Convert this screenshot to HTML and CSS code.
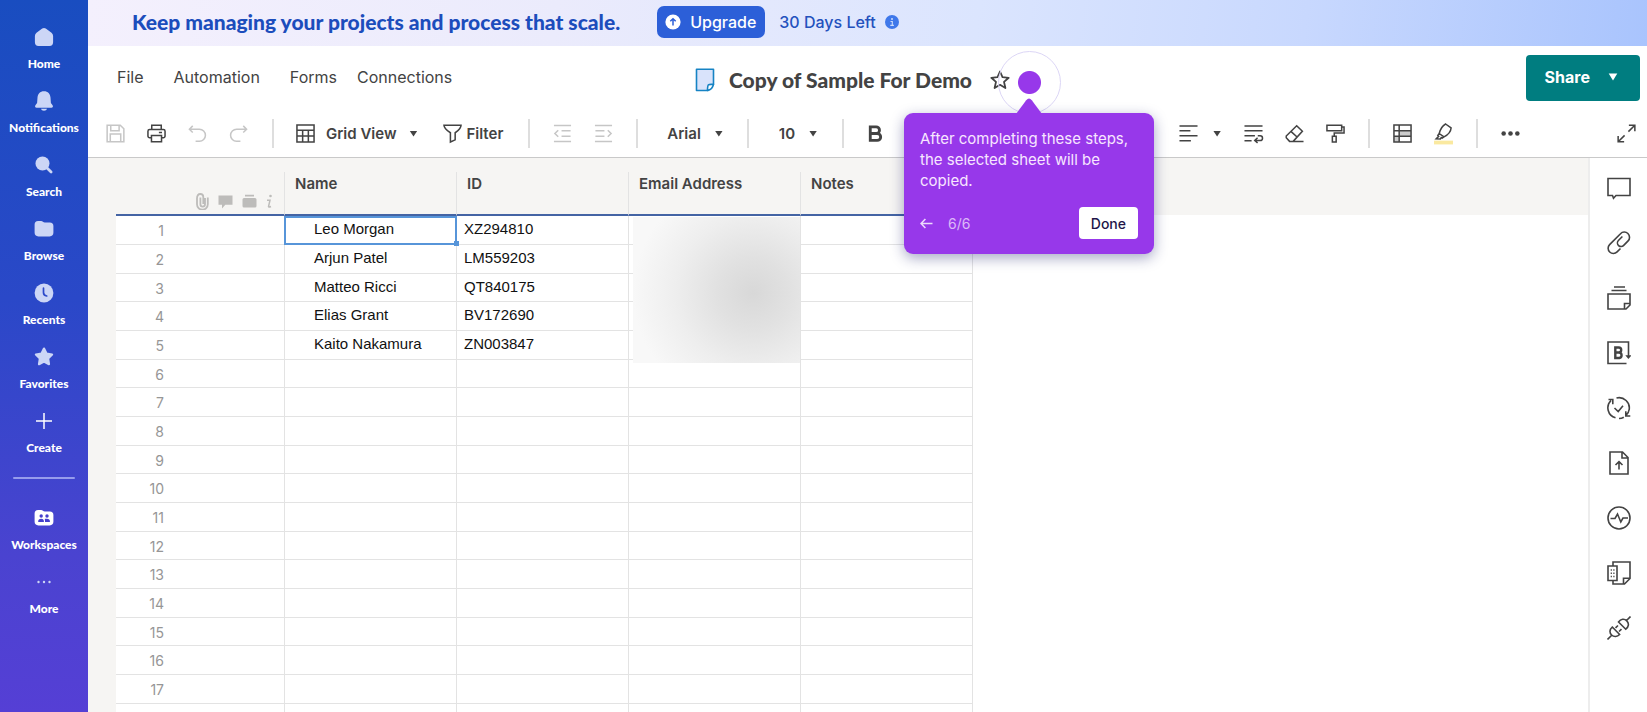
FILE: index.html
```html
<!DOCTYPE html>
<html lang="en">
<head>
<meta charset="utf-8">
<title>Copy of Sample For Demo</title>
<link rel="stylesheet" href="styles.css">
</head>
<body>
<div class="app">
  <nav class="sidebar" aria-label="Main">
    <a class="nav-item" href="#home"><svg class="nav-icon" viewBox="0 0 20 20"><path d="M8.2 1.6a3 3 0 0 1 3.6 0l5.7 4.1a4 4 0 0 1 1.6 3.2v6.4a3.6 3.6 0 0 1-3.6 3.6h-11a3.6 3.6 0 0 1-3.6-3.6V8.900a4 4 0 0 1 1.600-3.200z"/></svg><span>Home</span></a>
    <a class="nav-item" href="#notifications"><svg class="nav-icon" viewBox="0 0 20 20"><path d="M10 .3c4 0 6.200 2.700 6.500 6.300l.4 5.400 1.700 2.300c.8 1.200.1 2.500-1.200 2.500H2.600c-1.300 0-2-1.300-1.200-2.500L3.100 12l.4-5.400C3.800 3 6 .3 10 .3zM7 17.800h6c-.3 1.200-1.400 1.900-3 1.900s-2.700-.7-3-1.900z"/></svg><span>Notifications</span></a>
    <a class="nav-item" href="#search"><svg class="nav-icon" viewBox="0 0 20 20"><circle cx="8.500" cy="8.500" r="7"/><path d="M12.500 12.500l4.600 4.600" stroke="#ccd6f6" stroke-width="2.800" stroke-linecap="round"/></svg><span>Search</span></a>
    <a class="nav-item" href="#browse"><svg class="nav-icon" viewBox="0 0 20 20"><path d="M.6 5.500a3.500 3.500 0 0 1 3.500-3.500h3c1.500 0 2.200 1.500 3.700 1.500h5a3.600 3.600 0 0 1 3.600 3.600v6.500a3.800 3.800 0 0 1-3.800 3.800H4.400a3.800 3.800 0 0 1-3.800-3.800z"/></svg><span>Browse</span></a>
    <a class="nav-item" href="#recents"><svg class="nav-icon" viewBox="0 0 20 20"><circle cx="10" cy="10" r="9.400"/><path d="M9.500 5.200v4.300c0 1.700 1.200 3.200 3.200 3.500" fill="none" stroke="#2c49ca" stroke-width="1.700" stroke-linecap="round"/></svg><span>Recents</span></a>
    <a class="nav-item" href="#favorites"><svg class="nav-icon" viewBox="0 0 20 20"><path d="M10 1.600l2.500 5 5.600.9-4 4 .9 5.700-5-2.600-5 2.600.9-5.700-4-4 5.600-.9z" stroke="#ccd6f6" stroke-width="2.200" stroke-linejoin="round"/></svg><span>Favorites</span></a>
    <a class="nav-item" href="#create"><svg class="nav-icon nav-icon-bright" viewBox="0 0 20 20"><path d="M10 2v16M2 10h16" stroke="#fff" stroke-width="1.500"/></svg><span>Create</span></a>
    <hr class="nav-divider">
    <a class="nav-item" href="#workspaces"><svg class="nav-icon nav-icon-bright" viewBox="0 0 20 20"><path d="M.6 5.500A3.500 3.500 0 0 1 4.100 2h3c1.500 0 2.200 1.500 3.700 1.500h5a3.600 3.600 0 0 1 3.600 3.600v6.500a3.800 3.800 0 0 1-3.800 3.800H4.400a3.800 3.800 0 0 1-3.800-3.800z"/><g fill="#443fcd"><circle cx="7.200" cy="8" r="1.700"/><circle cx="13" cy="8" r="1.700"/><path d="M4.200 14v-.8c0-1.600 1-2.500 3-2.500 1.900 0 2.700.9 2.700 2.500v.8zM11 14v-.8c0-1 0-1.700-.5-2.100.6-.3 1.400-.4 2.400-.4 2 0 3 .9 3 2.500v.8z"/></g></svg><span>Workspaces</span></a>
    <a class="nav-item" href="#more"><svg class="nav-icon" viewBox="0 0 20 20"><circle cx="4.500" cy="10" r="1.200"/><circle cx="10" cy="10" r="1.200"/><circle cx="15.500" cy="10" r="1.200"/></svg><span>More</span></a>
  </nav>

  <div class="workspace">
    <div class="banner">
      <strong class="banner-text">Keep managing your projects and process that scale.</strong>
      <button class="upgrade" type="button"><svg width="16" height="16" viewBox="0 0 16 16"><circle cx="8" cy="8" r="7.600" fill="#fff"/><path d="M8 11.500V5M5.300 7.300L8 4.700l2.700 2.600" fill="none" stroke="#2c5fd8" stroke-width="1.500"/></svg>Upgrade</button>
      <span class="trial">30 Days Left</span>
      <svg class="info" width="14" height="14" viewBox="0 0 14 14"><circle cx="7" cy="7" r="7" fill="#3f78ea"/><circle cx="7" cy="4" r="1" fill="#cddcfb"/><path d="M5.500 6.500h1.800v4M5.300 10.400h3.600" fill="none" stroke="#cddcfb" stroke-width="1.100"/></svg>
    </div>

    <header class="header">
      <nav class="menu" aria-label="Sheet">
        <button type="button">File</button>
        <button type="button">Automation</button>
        <button type="button">Forms</button>
        <button type="button">Connections</button>
      </nav>
      <div class="title">
        <svg width="20" height="24" viewBox="0 0 20 24"><path d="M1.500 1.200h17v15.300l-5.500 6h-11.500z" fill="#d9e3fb" stroke="#1683c4" stroke-width="1.600" stroke-linejoin="round"/><path d="M12.400 22.500c.2-3.500.3-5 1-5.700.7-.6 2.400-.4 5-.4-.6 3.500-2.400 5.600-6 6.100z" fill="#fff" stroke="#1683c4" stroke-width="1.600" stroke-linejoin="round"/></svg>
        <h1>Copy of Sample For Demo</h1>
        <div class="favorite">
          <button type="button" aria-label="Favorite"><svg width="20" height="20" viewBox="0 0 20 20"><path d="M10 1.500l2.500 5.700 6.200.6-4.700 4.100 1.400 6.100-5.400-3.200-5.400 3.200L6 11.900 1.300 7.800l6.200-.6z" fill="none" stroke="#434343" stroke-width="1.800" stroke-linejoin="round"/></svg></button>
          <span class="beacon"></span>
          <section class="tour" role="dialog" aria-label="Guided tour">
            <svg class="tour-arrow" width="26" height="16" viewBox="0 0 26 16"><path d="M0 16L10.200 2.200q2.800-3.400 5.600 0L26 16z" fill="#9738ea"/></svg>
            <p>After completing these steps, the selected sheet will be copied.</p>
            <footer>
              <button class="tour-back" type="button" aria-label="Back"><svg width="13" height="11" viewBox="0 0 13 11"><path d="M12.500 5.500H1.200M5.400 1L1 5.500 5.400 10" fill="none" stroke="#ecd9fc" stroke-width="1.600"/></svg></button>
              <span class="tour-step">6/6</span>
              <button class="tour-done" type="button">Done</button>
            </footer>
          </section>
        </div>
      </div>
      <button class="share" type="button">Share<svg width="10" height="8" viewBox="0 0 10 8"><path d="M.7.500h8.600L5 7.500z" fill="#fff"/></svg></button>
    </header>

    <div class="toolbar" role="toolbar" aria-label="Formatting">
      <div class="tools tools-file">
        <button class="tool muted" type="button" aria-label="Save"><svg viewBox="0 0 20 20"><path d="M1.200 1.200H15L18.800 5v13.800H1.200zM5 1.500v5.700h8.800V1.500M4.500 18.500v-8h11v8"/></svg></button>
        <button class="tool" type="button" aria-label="Print"><svg viewBox="0 0 20 20"><path d="M5 5.500V1.200h10v4.300M4.500 14.500H2.800A1.800 1.800 0 0 1 1 12.700V7.500a1.800 1.800 0 0 1 1.800-1.800h14.400A1.800 1.800 0 0 1 19 7.500v5.200a1.800 1.800 0 0 1-1.800 1.800h-1.700M4.700 12h10.600v6.800H4.700zM12.500 8.900h3.300"/></svg></button>
        <button class="tool muted" type="button" aria-label="Undo"><svg viewBox="0 0 20 20"><path d="M5 2L1.500 5.500 5 9M1.800 5.500H12a6.300 6.300 0 0 1 0 12.700H8"/></svg></button>
        <button class="tool muted" type="button" aria-label="Redo"><svg viewBox="0 0 20 20"><path d="M15 2l3.500 3.500L15 9M18.200 5.500H8a6.300 6.300 0 0 0 0 12.700h4"/></svg></button>
      </div>
      <div class="tools tools-view">
        <button class="text-tool" type="button"><svg viewBox="0 0 20 20"><path d="M1 1h18v18H1zM1 6.500h18M1 12.700h18M7 6.500V19M13 6.500V19"/></svg>Grid View<i class="caret"></i></button>
        <button class="text-tool filter" type="button"><svg viewBox="0 0 20 20"><path d="M1 1.200h18c-.1 3.300-2 5.300-6.200 8v7.500l-5 2.300V9.200C3.500 6.500 1.200 4.500 1 1.200z"/></svg>Filter</button>
      </div>
      <div class="tools tools-indent">
        <button class="tool muted" type="button" aria-label="Outdent"><svg viewBox="0 0 20 20"><path d="M1 1.500h18M9 7.200h9.500M9 12.800h9.500M1 18.500h18M5.500 6.500L2 10l3.500 3.500"/></svg></button>
        <button class="tool muted" type="button" aria-label="Indent"><svg viewBox="0 0 20 20"><path d="M1 1.500h18M1.500 7.200H11M1.500 12.800H11M1 18.500h18M14.500 6.500L18 10l-3.500 3.500"/></svg></button>
      </div>
      <div class="tools tools-font">
        <label class="pick"><select aria-label="Font"><option>Arial</option></select><i class="caret"></i></label>
      </div>
      <div class="tools tools-size">
        <label class="pick"><select aria-label="Font size"><option>10</option></select><i class="caret"></i></label>
      </div>
      <div class="tools tools-bold">
        <button class="tool bold" type="button" aria-label="Bold"><svg viewBox="0 0 20 20"><path d="M4.500 3h6.200a3.500 3.500 0 0 1 0 7H4.500zM4.500 10h7.300a3.600 3.600 0 0 1 0 7.300H4.500z"/></svg></button>
      </div>
      <div class="tools tools-format">
        <button class="text-tool align" type="button" aria-label="Align"><svg viewBox="0 0 20 20"><path d="M.5 2h19M.5 7.200h11.500M.5 12.400h19M.5 17.600h12"/></svg><i class="caret"></i></button>
        <button class="tool" type="button" aria-label="Wrap"><svg viewBox="0 0 20 20"><path d="M.5 2h19M.5 7.200h19M.5 12.400h11M.5 17.600h7.500M14.500 12.400H17a2.300 2.300 0 0 1 0 5h-5M14.300 14.500l-3 2.900 3 2.500"/></svg></button>
        <button class="tool" type="button" aria-label="Clear format"><svg viewBox="0 0 20 20"><path d="M12.300 1.800l6 5.800-9.700 10.700H4.800L1.300 14.500v-1.800zM6.500 8l6.500 6M8.500 18.500h11"/></svg></button>
        <button class="tool" type="button" aria-label="Format painter"><svg viewBox="0 0 20 20"><path d="M1 1.300h15.500V7H1zM16.500 3.200H19v6.300H8.700v3M6.700 12.800h4v6.200h-4z"/></svg></button>
      </div>
      <div class="tools tools-cell">
        <button class="tool" type="button" aria-label="Conditional formatting"><svg viewBox="0 0 20 20"><path d="M7 7h12v6H7zM1 13h5.500v6H1z" class="shade"/><path d="M1 1h18v18H1zM1 7h18M1 13h18M6.500 1v18"/></svg></button>
        <button class="tool" type="button" aria-label="Highlight changes"><svg viewBox="0 0 20 20"><path d="M0 17.500h20v4H0z" class="marker"/><path d="M12.200 0l5.800 4.200c-.3 3.800-2.800 7-7.500 9.300L5.500 10C6.600 5.500 8.700 2 12.200 0zM5.500 10L4 12l.9 1-2.600 2.600 4.400.2.900-1.600 1 .7 1.900-1.400"/></svg></button>
      </div>
      <div class="tools tools-more">
        <button class="tool" type="button" aria-label="More"><svg viewBox="0 0 20 20"><g fill="#434343" stroke="none"><circle cx="2.800" cy="10" r="2.400"/><circle cx="10" cy="10" r="2.400"/><circle cx="17.200" cy="10" r="2.400"/></g></svg></button>
      </div>
      <button class="tool expand" type="button" aria-label="Expand"><svg viewBox="0 0 20 20"><path d="M12.500 1.200h6.300v6.300M18.500 1.500l-6.500 6.500M1.200 12.500v6.300h6.300M1.500 18.500L8 12"/></svg></button>
    </div>

    <div class="content">
      <main class="sheet">
        <table class="grid">
          <colgroup><col class="col-number"><col class="col-data"><col class="col-data"><col class="col-data"><col class="col-data"></colgroup>
          <thead>
            <tr>
              <th class="row-tools" aria-label="Row tools">
                <div class="row-icons">
                  <svg width="13" height="17" viewBox="0 0 13 17"><path d="M9 5v6.300a2.300 2.300 0 0 1-4.600 0V4.500M1 5v6.300a5 5 0 0 0 10.800 0V4.500M1 5.500C1 2.500 2.300 1 4.300 1s3 1.200 3 3v7" fill="none" stroke="#bdbcba" stroke-width="1.800"/></svg>
                  <svg width="15" height="15" viewBox="0 0 15 15"><path d="M.5 1.500h14v9.300H7.300L4 14.500v-3.700H.5z" fill="#bdbcba"/></svg>
                  <svg width="15" height="15" viewBox="0 0 15 15"><path d="M3 .8h9v1.700H3zM2 4h11q1.500 0 1.500 1.500V12q0 1.500-1.500 1.500H2Q.5 13.500.5 12V5.500Q.5 4 2 4z" fill="#bdbcba"/></svg>
                  <svg width="7" height="15" viewBox="0 0 7 15"><circle cx="4.500" cy="2" r="1.300" fill="#bdbcba"/><path d="M1 6.200h3L2.500 12.500q0 1 2.500 0" fill="none" stroke="#bdbcba" stroke-width="1.500"/></svg>
                </div>
              </th>
              <th>Name</th><th>ID</th><th>Email Address</th><th>Notes</th>
            </tr>
          </thead>
          <tbody>
            <tr><th>1</th><td class="name selected">Leo Morgan</td><td>XZ294810</td><td class="redacted"><div class="haze"></div></td><td></td></tr>
            <tr><th>2</th><td class="name">Arjun Patel</td><td>LM559203</td><td></td><td></td></tr>
            <tr><th>3</th><td class="name">Matteo Ricci</td><td>QT840175</td><td></td><td></td></tr>
            <tr><th>4</th><td class="name">Elias Grant</td><td>BV172690</td><td></td><td></td></tr>
            <tr><th>5</th><td class="name">Kaito Nakamura</td><td>ZN003847</td><td></td><td></td></tr>
            <tr><th>6</th><td></td><td></td><td></td><td></td></tr>
            <tr><th>7</th><td></td><td></td><td></td><td></td></tr>
            <tr><th>8</th><td></td><td></td><td></td><td></td></tr>
            <tr><th>9</th><td></td><td></td><td></td><td></td></tr>
            <tr><th>10</th><td></td><td></td><td></td><td></td></tr>
            <tr><th>11</th><td></td><td></td><td></td><td></td></tr>
            <tr><th>12</th><td></td><td></td><td></td><td></td></tr>
            <tr><th>13</th><td></td><td></td><td></td><td></td></tr>
            <tr><th>14</th><td></td><td></td><td></td><td></td></tr>
            <tr><th>15</th><td></td><td></td><td></td><td></td></tr>
            <tr><th>16</th><td></td><td></td><td></td><td></td></tr>
            <tr><th>17</th><td></td><td></td><td></td><td></td></tr>
            <tr><th></th><td></td><td></td><td></td><td></td></tr>
          </tbody>
        </table>
      </main>
      <aside class="rail" aria-label="Panels">
        <button type="button" aria-label="Conversations"><svg viewBox="0 0 24 24"><path d="M1 2.500h22v17H9l-2.500 2.700-1-2.700H1z"/></svg></button>
        <button type="button" aria-label="Attachments"><svg viewBox="0 0 24 24"><path d="M13.500 17.500l-3.400 3.400a5.200 5.200 0 0 1-7.500-7.300L13.500 2.700a5.200 5.200 0 0 1 7.600 7.200l-4.400 4.500a3.600 3.600 0 0 1-5.300-4.900l4-4"/></svg></button>
        <button type="button" aria-label="Proofs"><svg viewBox="0 0 24 24"><path d="M7 1h11M4.500 4.500h15M1 8h22v11l-4 4H1zM17.500 22.800v-5.300H23"/></svg></button>
        <button type="button" aria-label="Brandfolder"><svg viewBox="0 0 24 24"><path d="M21.500 15V1H1v21.500h18.500"/><path d="M18.300 14.300h6.200l-3.100 3.700z" fill="#434343" stroke="none"/><path d="M8.300 6.500h3.400a2.500 2.500 0 0 1 0 5H8.300zM8.300 11.500h4a2.800 2.800 0 0 1 0 5.500h-4z" stroke-width="2.400"/></svg></button>
        <button type="button" aria-label="Update requests"><svg viewBox="0 0 24 24"><path d="M8.500 21.800A10.300 10.300 0 0 1 4 4.500M1.500 3.500h4.300v4.800M9.500 2a10.300 10.300 0 0 1 12.600 12M12 22.500c2 0 3.500-.5 4.800-1.300M23.300 20h-4.500v-4.700M18.800 19.700q3-2.700 3.500-6.700M7.500 12l3.700 3.500L16 9.800"/></svg></button>
        <button type="button" aria-label="Publish"><svg viewBox="0 0 24 24"><path d="M3 1h12.500L21 6.500V23H3zM15 1v6h6M12 18.500V11M8.500 14L12 10.700l3.500 3.300"/></svg></button>
        <button type="button" aria-label="Activity log"><svg viewBox="0 0 24 24"><circle cx="12" cy="12" r="11"/><path d="M3.500 12.500H8l2.500-4.500 3.300 8 2.200-4h5"/></svg></button>
        <button type="button" aria-label="Summary"><svg viewBox="0 0 24 24"><path d="M1 5h9v14.500H1zM6 5V1h17v16.500L17.500 23H6v-3.500M16.500 22.800v-5.500H23M3.700 9h1.200M6.300 9h1.200M3.700 12.200h1.200M6.300 12.200h1.200M3.700 15.500h1.200M6.300 15.500h1.200"/></svg></button>
        <button type="button" aria-label="Connections"><svg viewBox="0 0 24 24"><path d="M.5 23.500l4-4M19.500 4.500l4-4M11.500 6l7.300 7.200c3-2.300 3.500-5.700 1-8.300s-6-2-8.300 1.100zM5.300 11l7.300 7.500c-2.300 2.500-5.700 2.700-8 .5s-2.200-5.500.7-8zM8.500 11.800L11 9.500M12 15.500l2.500-2.300"/></svg></button>
      </aside>
    </div>
  </div>
</div>
</body>
</html>
```

FILE: styles.css
```css
* { box-sizing: border-box; }

:root {
  --ink: #434343;
  --line: #e3e3e3;
  --paper: #f6f5f3;
  --brand: Lato, "Open Sans", sans-serif;
}

body {
  margin: 0;
  font-family: Inter, "Liberation Sans", sans-serif;
  color: var(--ink);
  background: #fff;
}

button, select {
  padding: 0;
  border: 0;
  background: none;
  font: inherit;
  color: inherit;
  cursor: pointer;
}

.app {
  display: flex;
  height: 100vh;
  overflow: hidden;
}

/* Sidebar */
.sidebar {
  flex: none;
  width: 88px;
  padding-top: 24px;
  background: linear-gradient(180deg, #194dc0 0%, #2a48c8 42%, #4a43d0 78%, #553fd5 100%);
}

.nav-item {
  display: flex;
  flex-direction: column;
  align-items: center;
  gap: 9px;
  height: 64px;
  padding-top: 3px;
  color: #fff;
  font: 900 12px/16px var(--brand);
  text-decoration: none;
}

.nav-icon { width: 20px; height: 20px; fill: #ccd6f6; }
.nav-icon-bright { fill: #fff; }

.nav-divider {
  height: 2px;
  margin: 5px 13px 26px;
  border: 0;
  border-radius: 1px;
  background: #969cec;
}

.workspace {
  flex: 1;
  min-width: 0;
  display: flex;
  flex-direction: column;
}

/* Banner */
.banner {
  flex: none;
  display: flex;
  align-items: center;
  height: 46px;
  padding: 0 44px 2px;
  color: #2351bd;
  background: linear-gradient(97deg, #f4f0fd 0%, #ebebfc 30%, #dbe5fe 57%, #c8d8fe 78%, #a9c4fd 100%);
}

.banner-text { font: 900 21px/28px var(--brand); color: #1c4dbc; }

.upgrade {
  display: flex;
  align-items: center;
  gap: 9px;
  height: 32px;
  margin: 0 14px 0 37px;
  padding: 0 9px 0 8px;
  border-radius: 7px;
  color: #fff;
  background: #2c5fd8;
  font-size: 16px;
  font-weight: 500;
}

.trial { font-size: 16px; font-weight: 500; }
.info { margin-left: 9px; }

/* Header */
.header {
  flex: none;
  display: grid;
  grid-template-columns: 1fr auto 1fr;
  align-items: center;
  height: 64px;
  padding: 0 7px 0 29px;
}

.menu {
  display: flex;
  gap: 30px;
  padding-bottom: 2px;
  font-size: 16px;
}

.menu button:last-child { margin-left: -10px; }

.title {
  display: flex;
  align-items: center;
  padding: 4px 52px 0 0;
}

.title h1 {
  margin: 0 18px 0 14px;
  font: 900 21px/28px var(--brand);
  white-space: nowrap;
}

.favorite { position: relative; padding-top: 4px; }
.favorite button { display: block; }

.share {
  justify-self: end;
  display: flex;
  align-items: center;
  gap: 18px;
  height: 46px;
  padding: 0 22px 2px 19px;
  border-radius: 4px;
  color: #fff;
  background: #007d80;
  font-size: 16px;
  font-weight: 700;
}

/* Guided tour */
.beacon {
  position: absolute;
  top: -15px;
  left: 8px;
  z-index: 2;
  width: 63px;
  height: 63px;
  border: 1px solid #dcd6f6;
  border-radius: 50%;
  background: radial-gradient(circle, #9738ea 11px, transparent 12px);
  pointer-events: none;
}

.tour {
  position: absolute;
  top: 47px;
  left: -86px;
  z-index: 3;
  width: 250px;
  padding: 15px 16px;
  border-radius: 9px;
  color: #f7e6ff;
  background: #9738ea;
  box-shadow: 0 4px 14px rgba(30, 35, 110, .4);
}

.tour-arrow { position: absolute; top: -15px; left: 112px; }

.tour p {
  margin: 0;
  font-size: 15px;
  font-weight: 400;
  line-height: 21px;
}

.tour footer {
  display: flex;
  align-items: center;
  margin-top: 16px;
}

.tour-step { margin-left: 15px; font-size: 14px; color: #dcb8f8; }

.tour .tour-done {
  height: 32px;
  margin-left: auto;
  padding: 0 12px;
  border-radius: 4px;
  color: #221548;
  background: #fff;
  font-size: 14px;
  font-weight: 500;
}

/* Toolbar */
.toolbar {
  flex: none;
  display: flex;
  align-items: center;
  height: 48px;
  padding: 0 7px;
  border-bottom: 1px solid #c9c9c9;
}

.toolbar svg {
  flex: none;
  width: 19px;
  height: 19px;
  fill: none;
  stroke: var(--ink);
  stroke-width: 1.6;
  overflow: visible;
}

.toolbar .marker { fill: #fae9a0; stroke: none; }
.toolbar .shade { fill: #ccc; stroke: none; }

.tools { display: flex; align-items: center; height: 29px; }

.tools + .tools { border-left: 2px solid #dedede; }

.tool {
  display: flex;
  align-items: center;
  justify-content: center;
  width: 41px;
  height: 29px;
}

.toolbar .muted svg { stroke: #c6c6c6; }
.toolbar .bold svg { stroke-width: 3; }

.text-tool {
  display: flex;
  align-items: center;
  font-size: 15px;
  font-weight: 600;
}

.caret {
  flex: none;
  width: 8px;
  height: 6px;
  background: var(--ink);
  clip-path: polygon(0 0, 100% 0, 50% 100%);
}

.tools-file { padding-right: 13px; }
.tools-view { padding: 0 25px 0 22px; }
.tools-view .text-tool { gap: 11px; }
.tools-view .caret { margin-left: 2px; }
.tools-view .filter { gap: 4px; margin-left: 26px; }
.tools-indent { padding: 0 12px; }
.tools-font { padding: 0 24px 0 29px; }
.tools-size { padding: 0 25px 0 30px; }
.tools-bold { padding: 0 11px; }
.toolbar .tools-format { margin-left: 272px; padding-right: 12px; border: 0; }
.tools-format .align { gap: 15px; margin-right: 12px; }
.tools-cell { padding: 0 12px; }
.tools-more { padding-left: 12px; }
.expand { margin-left: auto; width: 27px; }

.pick {
  display: flex;
  align-items: center;
  gap: 14px;
  font-size: 15px;
  font-weight: 600;
}

.pick select {
  appearance: none;
  field-sizing: content;
}

/* Sheet */
.content { flex: 1; min-height: 0; display: flex; }

.sheet {
  flex: 1;
  min-width: 0;
  padding: 14px 0 0 28px;
  overflow: hidden;
  background:
    linear-gradient(var(--paper), var(--paper)) 0 0 / 100% 57px no-repeat,
    linear-gradient(var(--paper), var(--paper)) 0 0 / 28px 100% no-repeat,
    #fff;
}

.grid {
  width: 857px;
  border-collapse: separate;
  border-spacing: 0;
  table-layout: fixed;
}

.col-number { width: 169px; }
.col-data { width: 172px; }

.grid th, .grid td { padding: 0; text-align: left; white-space: nowrap; }

.grid thead th {
  height: 44px;
  padding: 3px 10px 0;
  border-right: 1px solid var(--line);
  border-bottom: 2px solid #4464a4;
  font-size: 15px;
  font-weight: 600;
  line-height: 18px;
  vertical-align: top;
}

.grid thead th:last-child { border-right-color: transparent; }

.grid thead .row-tools { padding: 21px 11px 0 0; }

.row-icons {
  display: flex;
  align-items: center;
  justify-content: flex-end;
  gap: 9px;
}

.grid tbody tr { height: 29px; }
.grid tbody tr:nth-child(3n) { height: 28px; }

.grid tbody th {
  padding: 2px 120px 0 0;
  text-align: right;
  font-size: 14px;
  font-weight: 400;
  line-height: 20px;
  color: #969696;
}

.grid tbody th, .grid tbody td {
  border-right: 1px solid var(--line);
  border-bottom: 1px solid var(--line);
}

.grid tbody td {
  position: relative;
  padding: 0 7px 2px;
  font: 15px/20px "Liberation Sans", Arial, sans-serif;
  color: #111;
}

.grid tbody .name { padding-left: 29px; }

.selected::before {
  content: "";
  position: absolute;
  inset: 0 -1px -1px -1px;
  border: 2px solid #5795d9;
}

.selected::after {
  content: "";
  position: absolute;
  right: -3px;
  bottom: -2px;
  z-index: 1;
  width: 5px;
  height: 5px;
  background: #5795d9;
}

.haze {
  position: absolute;
  top: 1px;
  left: 4px;
  z-index: 1;
  width: 167px;
  height: 146px;
  background: radial-gradient(ellipse 72% 80% at 72% 52%, #d8d8d8 0%, #e1e1e1 30%, #eee 65%, #f8f8f8 100%);
}

/* Right rail */
.rail {
  flex: none;
  display: flex;
  flex-direction: column;
  align-items: center;
  gap: 31px;
  width: 59px;
  padding-top: 18px;
  border-left: 2px solid #ededed;
}

.rail button { display: block; height: 24px; }

.rail svg {
  display: block;
  width: 24px;
  height: 24px;
  fill: none;
  stroke: var(--ink);
  stroke-width: 1.600;
}
```
